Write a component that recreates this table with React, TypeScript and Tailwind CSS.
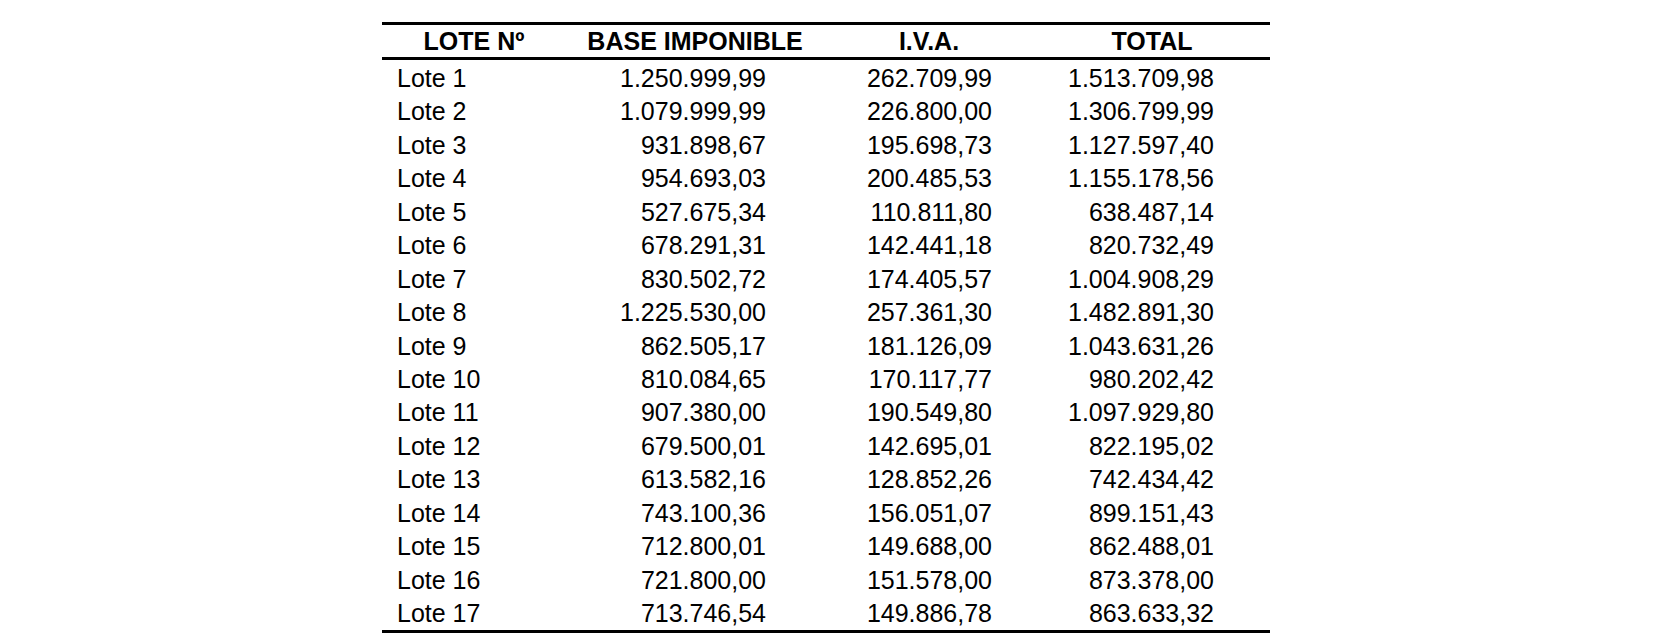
import React from "react";

const rows: [string, string, string, string][] = [
  ["Lote 1", "1.250.999,99", "262.709,99", "1.513.709,98"],
  ["Lote 2", "1.079.999,99", "226.800,00", "1.306.799,99"],
  ["Lote 3", "931.898,67", "195.698,73", "1.127.597,40"],
  ["Lote 4", "954.693,03", "200.485,53", "1.155.178,56"],
  ["Lote 5", "527.675,34", "110.811,80", "638.487,14"],
  ["Lote 6", "678.291,31", "142.441,18", "820.732,49"],
  ["Lote 7", "830.502,72", "174.405,57", "1.004.908,29"],
  ["Lote 8", "1.225.530,00", "257.361,30", "1.482.891,30"],
  ["Lote 9", "862.505,17", "181.126,09", "1.043.631,26"],
  ["Lote 10", "810.084,65", "170.117,77", "980.202,42"],
  ["Lote 11", "907.380,00", "190.549,80", "1.097.929,80"],
  ["Lote 12", "679.500,01", "142.695,01", "822.195,02"],
  ["Lote 13", "613.582,16", "128.852,26", "742.434,42"],
  ["Lote 14", "743.100,36", "156.051,07", "899.151,43"],
  ["Lote 15", "712.800,01", "149.688,00", "862.488,01"],
  ["Lote 16", "721.800,00", "151.578,00", "873.378,00"],
  ["Lote 17", "713.746,54", "149.886,78", "863.633,32"],
];

export default function App() {
  return (
    <div
      className="w-[1656px] h-[644px] bg-white text-black pt-[22px]"
      style={{ fontFamily: '"Liberation Sans", Arial, sans-serif' }}
    >
      <div className="ml-[382px] w-[888px] border-t-[3px] border-b-[3px] border-black">
        <div className="grid grid-cols-[184px_258px_210px_236px] h-[35px] items-center text-[25px] leading-[33px] font-bold border-b-[3px] border-black">
          <div className="text-center">LOTE Nº</div>
          <div className="text-center">BASE IMPONIBLE</div>
          <div className="text-center">I.V.A.</div>
          <div className="text-center">TOTAL</div>
        </div>
        <div className="pt-[2px]">
          {rows.map((r) => (
            <div
              key={r[0]}
              className="grid grid-cols-[184px_258px_210px_236px] text-[25px] leading-[33.43px]"
            >
              <div className="pl-[15px]">{r[0]}</div>
              <div className="text-right pr-[58px]">{r[1]}</div>
              <div className="text-right pr-[42px]">{r[2]}</div>
              <div className="text-right pr-[56px]">{r[3]}</div>
            </div>
          ))}
        </div>
      </div>
    </div>
  );
}
